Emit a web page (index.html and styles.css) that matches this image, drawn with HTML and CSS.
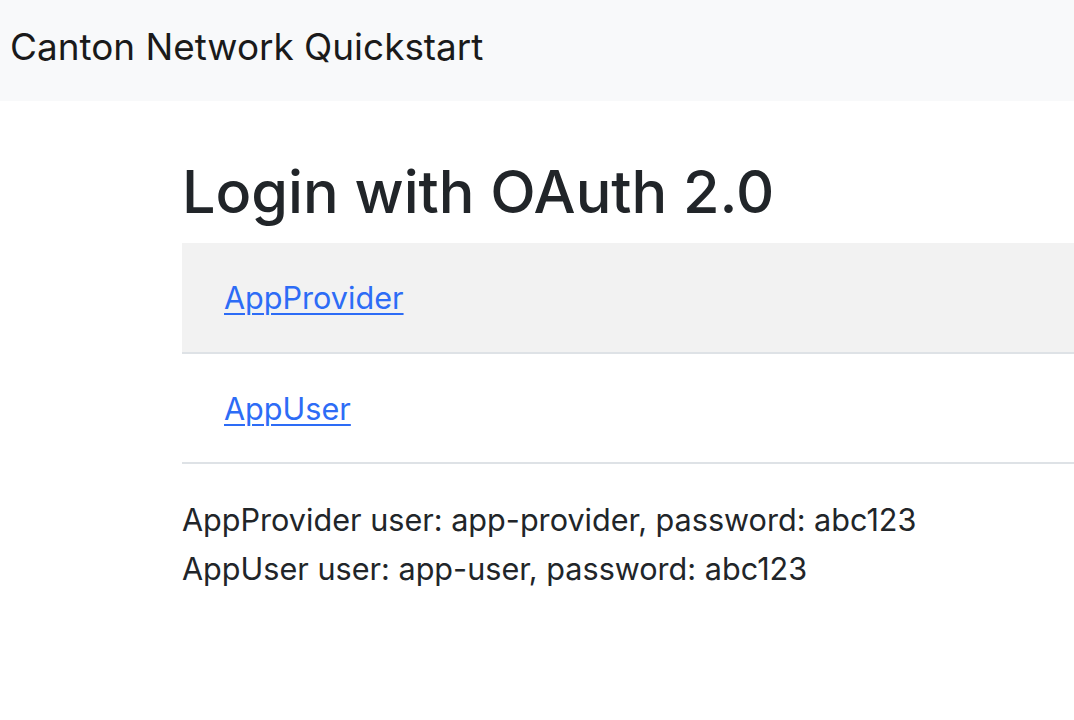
FILE: index.html
```html
<!DOCTYPE html>
<html lang="en">
<head>
<meta charset="utf-8">
<title>Canton Network Quickstart</title>
<link rel="stylesheet" href="styles.css">
</head>
<body>
<nav class="navbar">
  <span class="brand">Canton Network Quickstart</span>
</nav>
<main class="container">
  <h1 class="title">Login with OAuth 2.0</h1>
  <table class="login-table">
    <tbody>
      <tr class="striped"><td><a href="#" class="login-link">AppProvider</a></td></tr>
      <tr><td><a href="#" class="login-link">AppUser</a></td></tr>
    </tbody>
  </table>
  <div class="hints">
    <p class="hint">AppProvider user: app-provider, password: abc123</p>
    <p class="hint">AppUser user: app-user, password: abc123</p>
  </div>
</main>
</body>
</html>
```

FILE: styles.css
```css
* { box-sizing: border-box; }
html, body { margin: 0; padding: 0; }
body {
  font-family: Inter, "Liberation Sans", sans-serif;
  color: #212529;
  background: #ffffff;
  font-size: 30.6px;
  overflow: hidden;
}
.navbar {
  height: 101px;
  background: #f8f9fa;
  display: flex;
  align-items: center;
  padding-left: 10px;
  padding-bottom: 6px;
}
.brand {
  font-size: 36.9px;
  color: #1a1a1a;
  line-height: 1;
}
.container {
  padding-left: 182px;
}
.title {
  margin: 0;
  padding-top: 55px;
  font-size: 59.3px;
  font-weight: 500;
  line-height: 1.2;
  height: 142px;
}
.login-table {
  width: 100%;
  border-collapse: collapse;
}
.login-table td {
  height: 110px;
  padding: 0 42px;
  border-bottom: 2px solid #dee2e6;
  vertical-align: middle;
}
.login-table tr.striped td { background: #f2f2f2; }
.login-link {
  color: #2d6cf6;
  text-decoration: underline;
  text-underline-offset: 4px;
  text-decoration-thickness: 2px;
}
.hints { padding-top: 31px; }
.hint {
  margin: 0;
  line-height: 49px;
}
```
